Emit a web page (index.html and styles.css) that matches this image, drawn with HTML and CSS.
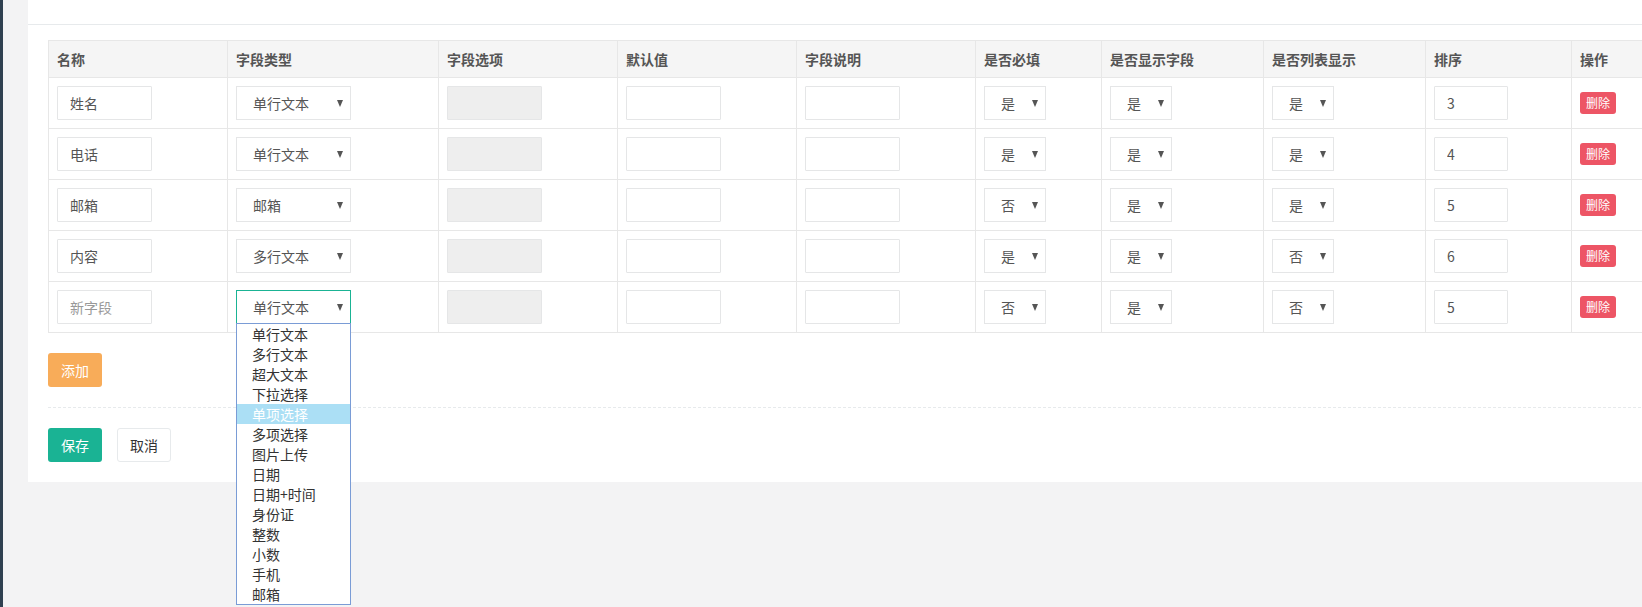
FILE: index.html
```html
<!DOCTYPE html>
<html lang="zh-CN">

<head>
    <meta charset="UTF-8">
    <meta name="viewport" content="width=device-width, initial-scale=1.0">
    <title>字段设置</title>
    <link rel="stylesheet" href="styles.css">
</head>

<body>
    <div class="layout">
        <aside class="nav-strip"></aside>

        <main class="wrapper">
            <div class="ibox">
                <div class="ibox-title"></div>
                <div class="ibox-content">
                    <!-- Field list -->
                    <table class="field-table">
                        <colgroup>
                            <col style="width: 179px">
                            <col style="width: 211px">
                            <col style="width: 179px">
                            <col style="width: 179px">
                            <col style="width: 179px">
                            <col style="width: 126px">
                            <col style="width: 162px">
                            <col style="width: 162px">
                            <col style="width: 146px">
                            <col style="width: 90px">
                        </colgroup>
                        <thead>
                            <tr>
                                <th>名称</th>
                                <th>字段类型</th>
                                <th>字段选项</th>
                                <th>默认值</th>
                                <th>字段说明</th>
                                <th>是否必填</th>
                                <th>是否显示字段</th>
                                <th>是否列表显示</th>
                                <th>排序</th>
                                <th>操作</th>
                            </tr>
                        </thead>
                        <tbody>
                            <tr>
                                <td><input class="form-control input-md" type="text" value="姓名"></td>
                                <td><div class="select select-type"><span>单行文本</span><i class="caret"></i></div></td>
                                <td><input class="form-control input-md" type="text" disabled></td>
                                <td><input class="form-control input-md" type="text"></td>
                                <td><input class="form-control input-md" type="text"></td>
                                <td><div class="select select-yn"><span>是</span><i class="caret"></i></div></td>
                                <td><div class="select select-yn"><span>是</span><i class="caret"></i></div></td>
                                <td><div class="select select-yn"><span>是</span><i class="caret"></i></div></td>
                                <td><input class="form-control input-sort" type="text" value="3"></td>
                                <td><button class="btn btn-xs btn-danger">删除</button></td>
                            </tr>
                            <tr>
                                <td><input class="form-control input-md" type="text" value="电话"></td>
                                <td><div class="select select-type"><span>单行文本</span><i class="caret"></i></div></td>
                                <td><input class="form-control input-md" type="text" disabled></td>
                                <td><input class="form-control input-md" type="text"></td>
                                <td><input class="form-control input-md" type="text"></td>
                                <td><div class="select select-yn"><span>是</span><i class="caret"></i></div></td>
                                <td><div class="select select-yn"><span>是</span><i class="caret"></i></div></td>
                                <td><div class="select select-yn"><span>是</span><i class="caret"></i></div></td>
                                <td><input class="form-control input-sort" type="text" value="4"></td>
                                <td><button class="btn btn-xs btn-danger">删除</button></td>
                            </tr>
                            <tr>
                                <td><input class="form-control input-md" type="text" value="邮箱"></td>
                                <td><div class="select select-type"><span>邮箱</span><i class="caret"></i></div></td>
                                <td><input class="form-control input-md" type="text" disabled></td>
                                <td><input class="form-control input-md" type="text"></td>
                                <td><input class="form-control input-md" type="text"></td>
                                <td><div class="select select-yn"><span>否</span><i class="caret"></i></div></td>
                                <td><div class="select select-yn"><span>是</span><i class="caret"></i></div></td>
                                <td><div class="select select-yn"><span>是</span><i class="caret"></i></div></td>
                                <td><input class="form-control input-sort" type="text" value="5"></td>
                                <td><button class="btn btn-xs btn-danger">删除</button></td>
                            </tr>
                            <tr>
                                <td><input class="form-control input-md" type="text" value="内容"></td>
                                <td><div class="select select-type"><span>多行文本</span><i class="caret"></i></div></td>
                                <td><input class="form-control input-md" type="text" disabled></td>
                                <td><input class="form-control input-md" type="text"></td>
                                <td><input class="form-control input-md" type="text"></td>
                                <td><div class="select select-yn"><span>是</span><i class="caret"></i></div></td>
                                <td><div class="select select-yn"><span>是</span><i class="caret"></i></div></td>
                                <td><div class="select select-yn"><span>否</span><i class="caret"></i></div></td>
                                <td><input class="form-control input-sort" type="text" value="6"></td>
                                <td><button class="btn btn-xs btn-danger">删除</button></td>
                            </tr>
                            <tr>
                                <td><input class="form-control input-md" type="text" placeholder="新字段"></td>
                                <td>
                                    <!-- open dropdown of the new field -->
                                    <div class="select select-type is-open"><span>单行文本</span><i class="caret"></i>
                                        <ul class="select-menu">
                                            <li>单行文本</li>
                                            <li>多行文本</li>
                                            <li>超大文本</li>
                                            <li>下拉选择</li>
                                            <li class="hover">单项选择</li>
                                            <li>多项选择</li>
                                            <li>图片上传</li>
                                            <li>日期</li>
                                            <li>日期+时间</li>
                                            <li>身份证</li>
                                            <li>整数</li>
                                            <li>小数</li>
                                            <li>手机</li>
                                            <li>邮箱</li>
                                        </ul>
                                    </div>
                                </td>
                                <td><input class="form-control input-md" type="text" disabled></td>
                                <td><input class="form-control input-md" type="text"></td>
                                <td><input class="form-control input-md" type="text"></td>
                                <td><div class="select select-yn"><span>否</span><i class="caret"></i></div></td>
                                <td><div class="select select-yn"><span>是</span><i class="caret"></i></div></td>
                                <td><div class="select select-yn"><span>否</span><i class="caret"></i></div></td>
                                <td><input class="form-control input-sort" type="text" value="5"></td>
                                <td><button class="btn btn-xs btn-danger">删除</button></td>
                            </tr>
                        </tbody>
                    </table>

                    <button class="btn btn-warning btn-add">添加</button>

                    <div class="hr-line-dashed"></div>

                    <div class="form-actions">
                        <button class="btn btn-primary">保存</button>
                        <button class="btn btn-white">取消</button>
                    </div>
                </div>
            </div>
        </main>
    </div>
</body>

</html>
```

FILE: styles.css
```css
/* Page frame */
html {
    overflow: hidden;
}

body {
    margin: 0;
    font-family: "Noto Sans CJK SC", "Open Sans", sans-serif;
    font-size: 14px;
    color: #676a6c;
    background-color: #f3f3f4;
}

.layout {
    display: flex;
    min-height: 607px;
}

.nav-strip {
    flex: none;
    width: 3px;
    background-color: #2f4050;
}

.wrapper {
    flex: none;
    padding-left: 25px;
    align-self: flex-start;
}

/* Panel */
.ibox {
    width: 1653px;
    background-color: #fff;
}

.ibox-title {
    height: 24px;
    border-bottom: 1px solid #e7eaec;
}

.ibox-content {
    padding: 15px 20px 20px;
}

/* Table */
.field-table {
    width: 1613px;
    table-layout: fixed;
    border-collapse: collapse;
}

.field-table th,
.field-table td {
    border: 1px solid #e7e7e7;
    padding: 8px;
    text-align: left;
    vertical-align: middle;
}

.field-table th {
    background-color: #f5f5f5;
    color: #555;
    font-weight: bold;
    line-height: 20px;
}

/* Inputs */
.form-control {
    display: block;
    box-sizing: border-box;
    height: 34px;
    padding: 6px 12px;
    font-family: inherit;
    font-size: 14px;
    color: #555;
    background-color: #fff;
    border: 1px solid #e5e6e7;
    border-radius: 1px;
    outline: none;
}

.form-control::placeholder {
    color: #999;
}

.form-control:disabled {
    background-color: #eee;
}

.input-md {
    width: 95px;
}

.input-sort {
    width: 74px;
}

/* Selects */
.select {
    position: relative;
    display: flex;
    align-items: center;
    justify-content: space-between;
    box-sizing: border-box;
    height: 34px;
    padding: 0 7px 0 16px;
    color: #555;
    background-color: #fff;
    border: 1px solid #e5e6e7;
}

.select-type {
    width: 115px;
}

.select-yn {
    width: 62px;
}

.select.is-open {
    border-color: #1ab394;
}

.caret {
    width: 0;
    height: 0;
    border-left: 3.5px solid transparent;
    border-right: 3.5px solid transparent;
    border-top: 7px solid #555;
}

.select-menu {
    position: absolute;
    top: 100%;
    left: -1px;
    z-index: 10;
    box-sizing: border-box;
    width: 115px;
    margin: 0;
    padding: 0;
    list-style: none;
    background-color: #fff;
    border: 1px solid #7a9cd6;
}

.select-menu li {
    padding-left: 15px;
    line-height: 20px;
    color: #333;
}

.select-menu li.hover {
    background-color: #abdff5;
    color: #fff;
}

/* Buttons */
.btn {
    display: inline-block;
    padding: 6px 12px;
    font-family: inherit;
    font-size: 14px;
    line-height: 20px;
    border: 1px solid transparent;
    border-radius: 3px;
    cursor: pointer;
}

.btn-xs {
    padding: 1px 5px;
    font-size: 12px;
    line-height: 18px;
}

.btn-danger {
    background-color: #ed5565;
    color: #fff;
}

.btn-warning {
    background-color: #f8ac59;
    color: #fff;
}

.btn-primary {
    background-color: #1ab394;
    color: #fff;
}

.btn-white {
    background-color: #fff;
    border-color: #e7eaec;
    color: #333;
}

.btn-add {
    display: block;
    margin-top: 20px;
}

.hr-line-dashed {
    margin: 20px 0;
    border-top: 1px dashed #e7eaec;
}

.form-actions {
    display: flex;
    gap: 15px;
}
```
